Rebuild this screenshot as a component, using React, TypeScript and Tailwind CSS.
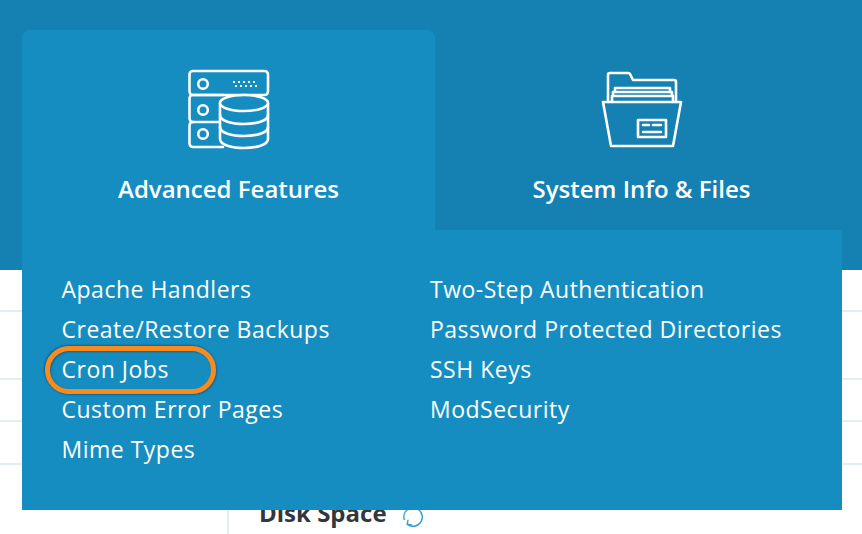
const leftLinks = ["Apache Handlers", "Create/Restore Backups", "Cron Jobs", "Custom Error Pages", "Mime Types"];
const rightLinks = ["Two-Step Authentication", "Password Protected Directories", "SSH Keys", "ModSecurity"];

function ServerIcon() {
  return (
    <svg width="84" height="82" viewBox="0 0 84 82" fill="none" stroke="white" strokeWidth="2.6" strokeLinejoin="round" strokeLinecap="round">
      <rect x="2.5" y="3" width="78.5" height="24" rx="3.5" />
      <path d="M36 27 H6 a3.5 3.5 0 0 0 -3.5 3.5 V50.5 a3.5 3.5 0 0 0 3.5 3.5 H33" />
      <path d="M6 54 a3.5 3.5 0 0 0 -3.5 3.5 V75.5 a3.5 3.5 0 0 0 3.5 3.5 H36" />
      <circle cx="16" cy="16" r="4.8" />
      <circle cx="16" cy="42" r="4.8" />
      <circle cx="16" cy="66" r="4.8" />
      <path d="M33 35 V71 C33 77 45 80 57 80 C69 80 81 77 81 71 V35" fill="#168dc0" />
      <ellipse cx="57" cy="35" rx="24" ry="8" fill="#168dc0" />
      <path d="M33 47 C33 53 45 56 57 56 C69 56 81 53 81 47" />
      <path d="M33 59 C33 65 45 68 57 68 C69 68 81 65 81 59" />
      <g stroke="none" fill="white">
        <rect x="46" y="13" width="2" height="2" />
        <rect x="51" y="13" width="2" height="2" />
        <rect x="56" y="13" width="2" height="2" />
        <rect x="61" y="13" width="2" height="2" />
        <rect x="66" y="13" width="2" height="2" />
        <rect x="48" y="17" width="2" height="2" />
        <rect x="53" y="17" width="2" height="2" />
        <rect x="58" y="17" width="2" height="2" />
        <rect x="63" y="17" width="2" height="2" />
        <rect x="68" y="17" width="2" height="2" />
      </g>
    </svg>
  );
}

function FolderIcon() {
  return (
    <svg width="84" height="80" viewBox="0 0 84 80" fill="none" stroke="white" strokeWidth="2.6" strokeLinejoin="round" strokeLinecap="round">
      <path d="M8 32 V5 a2 2 0 0 1 2 -2 H28 a2 2 0 0 1 2 1 L33 10 H74 a2 2 0 0 1 2 2 V32" />
      <path d="M15 22 V18 H70 V22" />
      <path d="M13 26 V22 H72 V26" />
      <path d="M12 32 V26 H73 V32" />
      <path d="M3 32 H81 L73 76 H11 Z" />
      <rect x="38" y="50" width="28" height="17" />
      <path d="M43 55 H49 M53 55 H61 M43 62 H61" />
    </svg>
  );
}

function RefreshIcon() {
  return (
    <svg width="20" height="20" viewBox="0 0 20 20" fill="none" stroke="#2e9fd3" strokeWidth="1.4" strokeLinecap="round" strokeLinejoin="round" className="ml-[16px] mt-[10px]">
      <path d="M15.5 2.5 A9.3 9.3 0 0 1 4.5 17.5" />
      <path d="M1.2 12.5 A9.3 9.3 0 0 1 5.5 2" />
      <path d="M5 13.2 L4.2 17.3 L8.4 18" />
    </svg>
  );
}

export default function App() {
  return (
    <div className="relative h-[534px] w-[862px] overflow-hidden bg-white font-['Open_Sans',sans-serif]">
      <div className="h-[270px] bg-[#1481b2]" />

      {/* page behind the menu */}
      <div className="h-[42px] border-b-2 border-[#e3eef3]" />
      <div className="h-[68px] border-b-2 border-[#e3eef3]" />
      <div className="h-[42px] border-b-2 border-[#e3eef3]" />
      <div className="h-[43px] border-b-2 border-[#e3eef3]" />
      <div className="ml-[227px] mt-[32px] flex h-[37px] items-start border-l-2 border-[#e3eef3] pl-[30px]">
        <span className="text-[24px] leading-[32px] font-bold text-[#32373c]">Disk Space</span>
        <RefreshIcon />
      </div>

      {/* dropdown */}
      <div className="absolute left-[22px] top-[30px] w-[820px]">
        <div className="flex h-[200px]">
          <div className="flex w-[413px] flex-col items-center rounded-t-[8px] bg-[#168dc0] pt-[38px]">
            <ServerIcon />
            <div className="mt-[24px] text-[24px] leading-[30px] font-semibold text-white">Advanced Features</div>
          </div>
          <div className="flex flex-1 flex-col items-center pl-[6px] pt-[40px]">
            <FolderIcon />
            <div className="mt-[24px] text-[24px] leading-[30px] font-semibold text-white">System Info &amp; Files</div>
          </div>
        </div>
        <div className="grid h-[280px] grid-cols-[368.5px_1fr] bg-[#168dc0] pl-[39.5px] pt-[39px] text-[23px] leading-[40px] tracking-[0.5px] text-white">
          <ul>
            {leftLinks.map((l) => (
              <li key={l}>
                <span className={l === "Cron Jobs" ? "relative" : ""}>
                  {l}
                  {l === "Cron Jobs" && (
                    <span className="absolute left-[-17px] top-[-7px] h-[48px] w-[171px] rounded-full border-[5px] border-[#fb8a1c] shadow-[-1px_-1px_2px_rgba(0,50,90,0.45),1px_1px_2px_rgba(0,50,90,0.45),inset_1px_1px_2px_rgba(0,50,90,0.45)]" />
                  )}
                </span>
              </li>
            ))}
          </ul>
          <ul>
            {rightLinks.map((l) => (
              <li key={l}>{l}</li>
            ))}
          </ul>
        </div>
      </div>
    </div>
  );
}
